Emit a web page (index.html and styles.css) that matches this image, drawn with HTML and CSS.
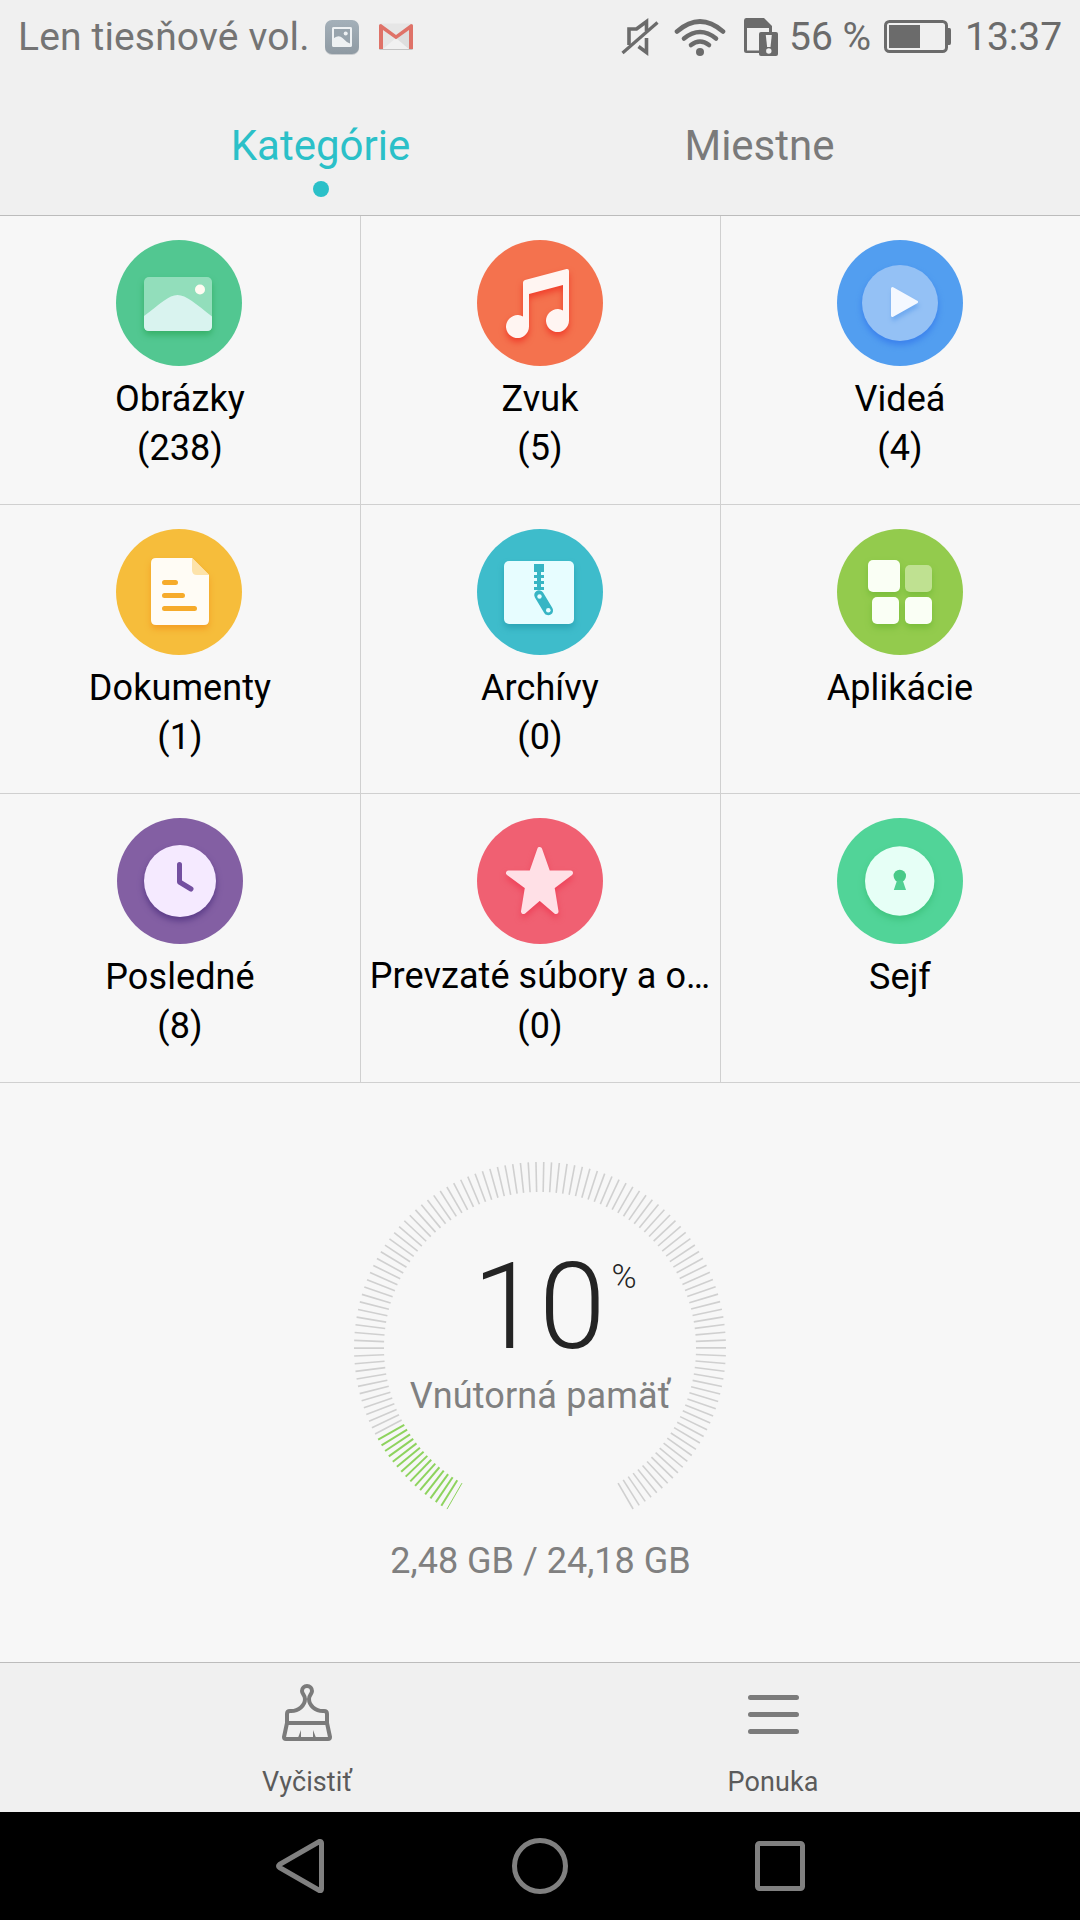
FILE: index.html
```html
<!DOCTYPE html>
<html lang="sk">
<head>
<meta charset="utf-8">
<title>Súbory</title>
<link rel="stylesheet" href="styles.css">
</head>
<body>
<div class="screen">
  <header class="header">
    <div class="status">
      <span class="carrier">Len tiesňové vol.</span>
      <svg class="st-gallery" width="36" height="38" viewBox="324 17 36 38">
        <defs><linearGradient id="gal" x1="0" y1="0" x2="0" y2="1"><stop offset="0" stop-color="#a4b0b9"/><stop offset="1" stop-color="#8f9aa3"/></linearGradient></defs>
        <rect x="325" y="20" width="34" height="34" rx="7" fill="#c9cccf"/>
        <rect x="325" y="19" width="34" height="34" rx="7" fill="url(#gal)"/>
        <rect x="333" y="27" width="18" height="18" rx="1" fill="none" stroke="#eef1f3" stroke-width="2"/>
        <path d="M333 27H351V42C346 40 343.500 35.500 339.500 35.500Q336 35.500 333 37.500Z" fill="#97a3ac"/>
        <path d="M334 37q6-4 9.500 0L351 42.500V28H334Z" fill="#98a4ad"/>
        <path d="M334 37q5-3.500 8.500 0 4 4.500 8.500 6V45H334Z" fill="#eef1f3"/>
        <rect x="333" y="27" width="18" height="18" rx="1" fill="none" stroke="#eef1f3" stroke-width="2"/>
        <circle cx="345.700" cy="32.500" r="2" fill="#eef1f3"/>
      </svg>
      <svg class="st-mail" width="36" height="30" viewBox="378 22 36 30">
        <rect x="379" y="24" width="34" height="26" rx="1.500" fill="#c4c4c4"/>
        <rect x="379" y="23.500" width="34" height="25.500" rx="1.500" fill="#e6e6e6"/>
        <path d="M383 49 396 38 409 49Z" fill="#f1f1f1"/>
        <path d="M396 38 409 29V49Z" fill="#d9d9d9" opacity=".6"/>
        <path d="M379 49V25.500Q379 24 381 24L396 35 411 24Q413 24 413 25.500V49H409V30L396 39.300 383 30V49Z" fill="#df7268"/>
      </svg>
      <div class="status-right">
        <svg class="st-mute" width="38" height="40" viewBox="620 16 38 40" fill="none" stroke="#6b6b6b" stroke-width="3.600">
          <path d="M628 44V28h7.500l10-7.500V30"/><path d="M637.500 45.500l8 6V37"/>
          <path d="M621.500 52 656.500 21.500" stroke-width="3.200"/>
        </svg>
        <svg class="st-wifi" width="52" height="40" viewBox="673 16 52 40" fill="none" stroke="#6b6b6b" stroke-width="4.600" stroke-linecap="round">
          <path d="M676 30.500Q699 10.500 722 30.500"/><path d="M683 37.500Q699 24.500 715 37.500"/><path d="M690 44Q699 37 708 44"/>
          <circle cx="699" cy="51" r="4" fill="#6b6b6b" stroke="none"/>
        </svg>
        <svg class="st-sim" width="36" height="40" viewBox="742 16 36 40">
          <path d="M745 17h18l8 8v8h-3V27H746V49.500h13v2.500H745.500Q743 52 743 49.500V19.500Q743 17 745 17Z" fill="#6b6b6b"/>
          <rect x="758" y="31" width="19" height="24" rx="2" fill="#6b6b6b"/>
          <path d="M764.800 34h6l-1.300 12h-3.400Z" fill="#f0f0f0"/><circle cx="767.800" cy="50" r="2.700" fill="#f0f0f0"/>
        </svg>
        <span class="percent">56 %</span>
        <svg class="st-batt" width="68" height="34" viewBox="884 21 68 34">
          <rect x="885.500" y="22.500" width="61" height="30" rx="4" fill="none" stroke="#6b6b6b" stroke-width="3"/>
          <rect x="889" y="26" width="31" height="23" fill="#6b6b6b"/><path d="M948 29h1.500q1.500 0 1.500 2v13q0 2-1.500 2H948Z" fill="#6b6b6b"/>
        </svg>
        <span class="clock">13:37</span>
      </div>
    </div>
    <nav class="tabs">
      <div class="tab active">Kategórie</div>
      <div class="tab">Miestne</div>
    </nav>
  </header>

  <main class="content">
    <section class="grid">
      <div class="cell">
        <svg class="ico" viewBox="1 0 126 126"><circle cx="63" cy="63" r="63" fill="#52c791"/>
          <g class="sh-green"><rect x="28" y="37" width="68" height="54" rx="5" fill="#92debb"/></g>
          <path d="M28 76C44 64 53 55 61.500 55S80 64 96 76.500V86q0 5-5 5H33q-5 0-5-5Z" fill="#d9f3ef"/><circle cx="84" cy="49.500" r="5" fill="#fffbf2"/></svg>
        <div class="name">Obrázky</div><div class="count">(238)</div>
      </div>
      <div class="cell">
        <svg class="ico" viewBox="0 0 126 126"><circle cx="63" cy="63" r="63" fill="#f4724e"/>
          <path class="sh-red" d="M46 42.500q0-2 2-2.500L89.500 29Q92 28.500 92 31V80.500A11.500 11.500 0 1 1 86 70.500V45L52 54V86.500A11.500 11.500 0 1 1 46 76.500Z" fill="#fff5f2"/></svg>
        <div class="name">Zvuk</div><div class="count">(5)</div>
      </div>
      <div class="cell">
        <svg class="ico" viewBox="0 0 126 126"><circle cx="63" cy="63" r="63" fill="#529ef0"/>
          <circle class="sh-blue" cx="63" cy="63" r="38" fill="#94c1f5"/>
          <path class="sh-soft" d="M55.500 48.500 79.500 62 55.500 75.500Z" fill="#f4f8ff" stroke="#f4f8ff" stroke-width="3" stroke-linejoin="round"/></svg>
        <div class="name">Videá</div><div class="count">(4)</div>
      </div>
      <div class="cell">
        <svg class="ico" viewBox="1 0 126 126"><circle cx="63" cy="63" r="63" fill="#f6bd3b"/>
          <path class="sh-amber" d="M40 29H76L93 46V91q0 5-5 5H40q-5 0-5-5V34q0-5 5-5Z" fill="#fffcf5"/>
          <path d="M76 29 93 46H81q-5 0-5-5Z" fill="#fde3aa"/>
          <path d="M48.500 53.500h11M48.500 66.500h18M48.500 79.500h30" stroke="#f6ab2b" stroke-width="5" stroke-linecap="round"/></svg>
        <div class="name">Dokumenty</div><div class="count">(1)</div>
      </div>
      <div class="cell">
        <svg class="ico" viewBox="0 0 126 126"><circle cx="63" cy="63" r="63" fill="#3ebccb"/>
          <rect class="sh-teal" x="27" y="32" width="70" height="63" rx="5" fill="#e7fdff"/>
          <path d="M57 35H67v8H64v3h3v3H64v3h3v3H64v3h3v3H57v-3h3v-3H57v-3h3v-3H57v-3h3v-3H57Z" fill="#37b5c4"/>
          <path d="M62 66 71.300 81.500" stroke="#37b5c4" stroke-width="9.500" stroke-linecap="round"/>
          <circle cx="71.300" cy="81.300" r="2.300" fill="#e7fdff"/><circle cx="62.500" cy="67.500" r="2.200" fill="#e7fdff"/></svg>
        <div class="name">Archívy</div><div class="count">(0)</div>
      </div>
      <div class="cell">
        <svg class="ico" viewBox="0 0 126 126"><circle cx="63" cy="63" r="63" fill="#93cb4d"/>
          <g class="sh-lime" fill="#fafff5"><rect x="31" y="31" width="32" height="32" rx="5"/><rect x="35" y="68" width="27" height="27" rx="5"/><rect x="68" y="68" width="27" height="27" rx="5"/><rect x="68" y="36" width="27" height="27" rx="5" fill="#bfe191"/></g></svg>
        <div class="name">Aplikácie</div>
      </div>
      <div class="cell">
        <svg class="ico" viewBox="0 0 126 126"><circle cx="63" cy="63" r="63" fill="#835fa3"/>
          <circle class="sh-purple" cx="63" cy="63" r="36" fill="#f5eaff"/>
          <path d="M62.500 46.500V64L74 71" fill="none" stroke="#7350a0" stroke-width="5" stroke-linecap="round" stroke-linejoin="round"/></svg>
        <div class="name">Posledné</div><div class="count">(8)</div>
      </div>
      <div class="cell">
        <svg class="ico" viewBox="0 0 126 126"><circle cx="63" cy="63" r="63" fill="#f06072"/>
          <path class="sh-rose" d="M62.700 31.500 71 55H93.500L75 69 79 93.500 62.700 79.500 46.500 93.500 50.500 69 31.500 55H54.500Z" fill="#ffe0e6" stroke="#ffe0e6" stroke-width="5" stroke-linejoin="round"/></svg>
        <div class="name long">Prevzaté súbory a o…</div><div class="count">(0)</div>
      </div>
      <div class="cell">
        <svg class="ico" viewBox="0 0 126 126"><circle cx="63" cy="63" r="63" fill="#51d498"/>
          <circle class="sh-mint" cx="62.700" cy="63" r="34.700" fill="#e6fff6"/>
          <circle cx="62.800" cy="58" r="6.200" fill="#48ca88"/><path d="M60 62.500h5.800L69 72H56.800Z" fill="#50d093"/></svg>
        <div class="name">Sejf</div>
      </div>
    </section>

    <section class="storage">
      <div class="gauge">
        <svg class="ticks" id="ticks" viewBox="-190 -190 380 380"></svg>
        <div class="readout">
          <div class="value">10<span class="unit">%</span></div>
          <div class="label">Vnútorná pamäť</div>
        </div>
      </div>
      <div class="usage">2,48 GB / 24,18 GB</div>
    </section>
  </main>

  <footer class="actions">
    <div class="action">
      <svg class="act-ico" width="52" height="60" viewBox="282 1682 52 60" fill="none" stroke="#7b7b7b" stroke-width="4" stroke-linejoin="round">
        <path d="M288 1723.500V1714q0-3 3-3c9 .5 15-6 15-12 0-4-3-5-3-8a5 5 0 0 1 10 0c0 3-3 4-3 8 0 6 6 12.500 15 12q3 0 3 3v9.500"/>
        <path d="M288 1723H328L331 1737q0 2-2 2H287q-2 0-2-2Z"/>
        <path d="M298.500 1739 302 1730V1739ZM317.500 1739 314 1730V1739Z" fill="#7b7b7b" stroke="none"/>
      </svg>
      <div>Vyčistiť</div>
    </div>
    <div class="action">
      <svg class="act-ico" width="52" height="60" viewBox="747 1682 52 60" stroke="#7b7b7b" stroke-width="5" stroke-linecap="round"><path d="M750.500 1697.500h46M750.500 1714.500h46M750.500 1731.500h46"/></svg>
      <div>Ponuka</div>
    </div>
  </footer>

  <nav class="navbar">
    <svg width="60" height="60" viewBox="270 1836 60 60" fill="none" stroke="#808080" stroke-width="5" stroke-linejoin="round"><path d="M319.500 1841.500Q321.500 1841 321.500 1843V1889Q321.500 1891 319.500 1890.500L279.500 1867.500Q277.500 1866 279.500 1864.500Z"/></svg>
    <svg width="60" height="60" viewBox="510 1836 60 60" fill="none" stroke="#808080" stroke-width="5"><circle cx="540" cy="1866" r="25.500"/></svg>
    <svg width="60" height="60" viewBox="750 1836 60 60" fill="none" stroke="#808080" stroke-width="5"><rect x="757.500" y="1843.500" width="45" height="45" rx="2"/></svg>
  </nav>
</div>
<script src="gauge.js"></script>
</body>
</html>
```
FILE: styles.css
```css
* { box-sizing: border-box; }
body { margin: 0; background: #000; font-family: Roboto, "Noto Sans", sans-serif; }
.screen { width: 1080px; height: 1920px; display: flex; flex-direction: column; overflow: hidden; }
svg { display: block; flex: none; }

.header { height: 216px; background: #f0f0f0; border-bottom: 1px solid #bcbcbc; }
.status { height: 74px; padding: 0 18px; display: flex; align-items: center; font-size: 39px; line-height: 74px; color: #747474; white-space: nowrap; }
.carrier { width: 306px; letter-spacing: 0.15px; }
.st-mail { margin-left: 18px; }
.status-right { margin-left: auto; display: flex; align-items: center; color: #6b6b6b; }
.st-wifi { margin-left: 15px; }
.st-sim { margin-left: 17px; }
.percent { width: 82px; margin-left: 10px; }
.st-batt { margin-left: 13px; }
.clock { width: 98px; margin-left: 13px; }
.status-right { margin-right: -1px; }

.tabs { padding-left: 101px; display: flex; }
.tab { width: 439px; height: 141px; padding-top: 46px; display: flex; flex-direction: column; align-items: center; font-size: 42px; line-height: 51px; color: #7a7a7a; }
.tab.active { color: #2bc0c8; }
.tab.active::after { content: ""; width: 16px; height: 16px; margin-top: 10px; border-radius: 50%; background: #2bc0c8; }

.content { flex: 1; background: #f7f7f7; }
.grid { display: grid; grid-template-columns: repeat(3, 360px); grid-auto-rows: 289px; }
.cell { display: flex; flex-direction: column; align-items: center; padding-top: 24px; border-bottom: 1px solid #d0d0d0; font-size: 36px; line-height: 49px; letter-spacing: 0.08px; color: #000; white-space: nowrap; }
.cell:not(:nth-child(3n+1)) { box-shadow: inset 1px 0 #d0d0d0; }
.ico { width: 126px; height: 126px; margin-bottom: 9px; overflow: visible; }
.name.long { margin-top: -1px; margin-bottom: 1px; }

.sh-green { filter: drop-shadow(0 4px 3px #36b068); }
.sh-red { filter: drop-shadow(0 4px 3px #f03f2c); }
.sh-blue { filter: drop-shadow(0 4px 3px #3a80ec); }
.sh-soft { filter: drop-shadow(1px 4px 2px #6fa9ef); }
.sh-amber { filter: drop-shadow(0 4px 3px #f49f24); }
.sh-teal { filter: drop-shadow(0 4px 3px #2ba4b5); }
.sh-lime { filter: drop-shadow(0 4px 3px #79bd3a); }
.sh-purple { filter: drop-shadow(0 4px 3px #5a3b87); }
.sh-rose { filter: drop-shadow(0 4px 3px #ee4259); }
.sh-mint { filter: drop-shadow(0 4px 3px #3fc47f); }

.storage { display: flex; flex-direction: column; align-items: center; padding-top: 75px; }
.gauge { width: 380px; height: 380px; display: grid; }
.gauge > * { grid-area: 1 / 1; }
.ticks { width: 380px; height: 380px; }
.readout { padding-top: 79px; display: flex; flex-direction: column; align-items: center; }
.value { position: relative; margin-left: -2px; font-size: 120px; line-height: 140px; font-weight: 300; color: #242424; }
.unit { position: absolute; left: calc(100% + 6px); top: 19px; font-size: 34px; line-height: 40px; font-weight: 300; }
.label { font-size: 36px; line-height: 42px; letter-spacing: 0.15px; color: #808080; margin-top: -2px; }
.usage { font-size: 36px; line-height: 42px; color: #808080; margin-top: 2px; margin-left: 1px; }

.actions { height: 150px; background: #f0f0f0; border-top: 1px solid #bcbcbc; display: flex; padding-left: 74px; }
.action { width: 466px; padding-top: 19px; display: flex; flex-direction: column; align-items: center; font-size: 27px; line-height: 34px; letter-spacing: 0.1px; color: #5b5b5b; }
.act-ico { margin-bottom: 23px; }

.navbar { height: 108px; background: #000; display: flex; justify-content: center; align-items: center; gap: 180px; }
```
FILE: gauge.js
```js
// Storage dial: ticks run clockwise, angles are measured from the bottom.
// Spacing is tighter toward the two open ends of the arc.
const dial = document.getElementById('ticks');
const OUTER = 186, INNER = 156, USED = 16;
const SEGMENTS = [
  { count: 16, from: 2.03, to: 2.03 },
  { count: 12, from: 2.16, to: 2.42 },
  { count: 75, from: 2.4, to: 2.4 },
  { count: 26, from: 2.42, to: 2.195 }
];

function tick(angle, index) {
  const a = angle * Math.PI / 180;
  const line = document.createElementNS('http://www.w3.org/2000/svg', 'line');
  line.setAttribute('x1', -Math.sin(a) * INNER);
  line.setAttribute('y1', Math.cos(a) * INNER);
  line.setAttribute('x2', -Math.sin(a) * OUTER);
  line.setAttribute('y2', Math.cos(a) * OUTER);
  line.setAttribute('stroke', index < USED ? '#8ed35e' : '#d0d0d0');
  line.setAttribute('stroke-width', index === 0 ? 1 : index < USED ? 2 : 1.6);
  dial.appendChild(line);
}

let angle = 30, index = 0;
tick(angle, index++);
for (const s of SEGMENTS) {
  for (let i = 0; i < s.count; i++) {
    angle += s.from + (s.to - s.from) * i / (s.count - 1);
    tick(angle, index++);
  }
}
```
